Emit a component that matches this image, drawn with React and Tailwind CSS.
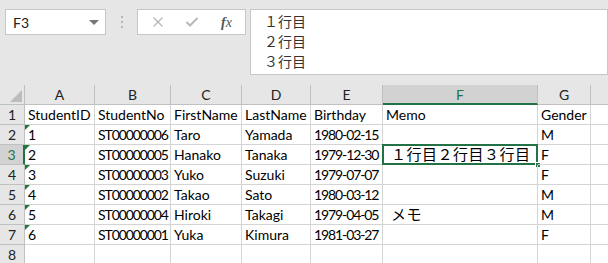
import React from 'react';

const cols = ['A', 'B', 'C', 'D', 'E', 'F', 'G'];
const widths = 'grid-cols-[25px_70px_76px_71px_69px_72px_155px_53px_1fr]';

const rows = [
  ['StudentID', 'StudentNo', 'FirstName', 'LastName', 'Birthday', 'Memo', 'Gender'],
  ['1', 'ST00000006', 'Taro', 'Yamada', '1980-02-15', '', 'M'],
  ['2', 'ST00000005', 'Hanako', 'Tanaka', '1979-12-30', '１行目２行目３行目', 'F'],
  ['3', 'ST00000003', 'Yuko', 'Suzuki', '1979-07-07', '', 'F'],
  ['4', 'ST00000002', 'Takao', 'Sato', '1980-03-12', '', 'M'],
  ['5', 'ST00000004', 'Hiroki', 'Takagi', '1979-04-05', 'メモ', 'M'],
  ['6', 'ST00000001', 'Yuka', 'Kimura', '1981-03-27', '', 'F'],
  ['', '', '', '', '', '', ''],
];

const font = { fontFamily: 'Lato, "Noto Sans CJK JP", sans-serif' };
const cjkFont = { fontFamily: '"Noto Sans CJK JP", sans-serif' };

export default function App() {
  return (
    <div className="w-[608px] h-[263px] overflow-hidden bg-white text-black" style={font}>
      {/* formula bar */}
      <div className="h-[85px] bg-[#e6e6e6] flex items-start pt-[9px] pl-[5px]">
        <div className="w-[101px] h-[26px] bg-white border border-[#c6c6c6] flex items-center pl-[7px] pr-[6px] text-[14px] text-[#222]">
          <span className="flex-1">F3</span>
          <span className="w-0 h-0 border-l-[5px] border-r-[5px] border-t-[5px] border-l-transparent border-r-transparent border-t-[#777]" />
        </div>
        <div className="w-[31px] h-[26px] flex flex-col items-center justify-center gap-[3px]">
          <span className="w-[2px] h-[2px] bg-[#b5b5b5]" />
          <span className="w-[2px] h-[2px] bg-[#b5b5b5]" />
          <span className="w-[2px] h-[2px] bg-[#b5b5b5]" />
        </div>
        <div className="w-[109px] h-[26px] bg-white border border-[#c6c6c6] flex items-center pl-[14px]">
          <svg width="12" height="12" viewBox="0 0 12 12">
            <path d="M1.5 1.5 L10.5 10.5 M10.5 1.5 L1.5 10.5" stroke="#b8b8b8" strokeWidth="1.4" />
          </svg>
          <svg width="14" height="12" viewBox="0 0 14 12" className="ml-[21px]">
            <path d="M1.5 6 L5 9.5 L12.5 2" stroke="#b8b8b8" strokeWidth="2" fill="none" />
          </svg>
          <span className="ml-[22px] text-[14px] italic text-[#555]" style={{ fontFamily: '"Liberation Serif", serif' }}>
            <span className="font-bold">f</span>x
          </span>
        </div>
        <div className="ml-[4px] flex-1 h-[66px] bg-white border border-[#c6c6c6] pl-[13px] pt-[1px] text-[14px] leading-[20px] text-[#333]" style={cjkFont}>
          <div>１行目</div>
          <div>２行目</div>
          <div>３行目</div>
        </div>
      </div>

      {/* grid */}
      <div className={`grid ${widths} text-[14px]`}>
        <div className="h-[20px] bg-[#e6e6e6] border-r border-b border-[#c0c0c0] flex items-end justify-end pr-[2px] pb-[2px]">
          <svg width="12" height="12" viewBox="0 0 12 12">
            <path d="M12 0 L12 12 L0 12 Z" fill="#bcbcbc" />
          </svg>
        </div>
        {cols.map((c) => (
          <div
            key={c}
            className={`h-[20px] flex items-center justify-center border-r border-[#c0c0c0] ${
              c === 'F' ? 'bg-[#d2d2d2] border-b-2 border-b-[#217346] text-[#217346]' : 'bg-[#e6e6e6] border-b border-b-[#c0c0c0] text-[#222]'
            }`}
          >
            {c}
          </div>
        ))}
        <div className="h-[20px] bg-[#e6e6e6] border-b border-[#c0c0c0]" />

        {rows.map((r, i) => (
          <React.Fragment key={i}>
            <div
              className={`h-[20px] flex items-center justify-center ${
                i === 2 ? 'bg-[#d2d2d2] border-r-2 border-[#217346] text-[#217346] border-b border-b-[#c0c0c0]' : 'bg-[#e6e6e6] border-r border-b border-[#c0c0c0] text-[#222]'
              }`}
            >
              {i + 1}
            </div>
            {r.map((v, j) => {
              const selected = i === 2 && j === 5;
              const cjk = j === 5 && i > 0;
              const numeric = i > 0 && (j === 1 || j === 4);
              return (
                <div
                  key={j}
                  className="relative h-[20px] border-r border-b border-[#d4d4d4] flex items-center pl-[3px] whitespace-nowrap overflow-visible"
                >
                  {j === 0 && i > 0 && i < 7 && (
                    <span className="absolute left-0 top-0 w-0 h-0 border-t-[5px] border-r-[5px] border-t-[#1e7b34] border-r-transparent" />
                  )}
                  <span
                    className={cjk ? 'text-[15px] pl-[5px] tracking-[0.5px]' : numeric ? 'tracking-[-1.1px]' : ''}
                    style={cjk ? cjkFont : undefined}
                  >
                    {v}
                  </span>
                  {selected && (
                    <>
                      <span className="absolute left-[-1px] top-[-1px] right-[-1px] bottom-[-1px] border-2 border-[#217346]" />
                      <span className="absolute right-[-4px] bottom-[-4px] w-[6px] h-[6px] bg-[#217346] border border-white" />
                    </>
                  )}
                </div>
              );
            })}
            <div className="h-[20px] border-b border-[#d4d4d4]" />
          </React.Fragment>
        ))}
      </div>
    </div>
  );
}
